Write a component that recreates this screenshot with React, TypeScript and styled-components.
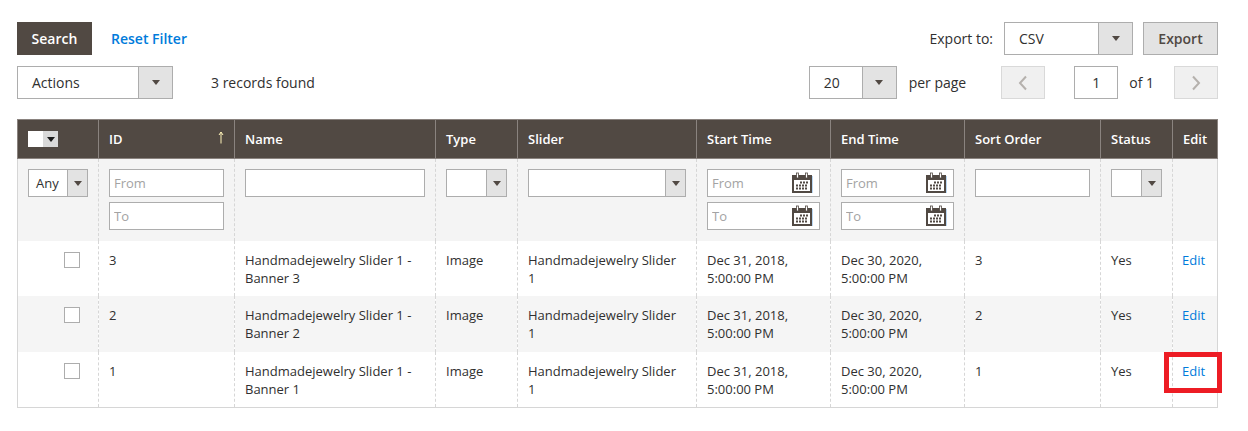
import React from 'react';
import styled, { createGlobalStyle } from 'styled-components';

const GlobalStyle = createGlobalStyle`
  body {
    margin: 0;
    background: #fff;
    font-family: 'Open Sans', sans-serif;
    color: #303030;
  }
`;

const Page = styled.div`
  padding: 22px 30px 23px 17px;
`;

const Toolbar = styled.div`
  display: flex;
  align-items: center;
  height: 33px;
  margin-bottom: 11px;
  font-size: 14px;
  &:last-of-type {
    margin-bottom: 20px;
  }
`;

const RightGroup = styled.div`
  display: flex;
  align-items: center;
  margin-left: auto;
`;

const SearchButton = styled.button`
  width: 75px;
  height: 33px;
  border: 0;
  padding: 0;
  background: #514943;
  color: #fff;
  font-family: inherit;
  font-size: 14px;
  font-weight: 600;
`;

const ResetLink = styled.a`
  margin-left: 19px;
  color: #007bdb;
  font-weight: 600;
  font-size: 14px;
`;

const ExportButton = styled.button`
  width: 75px;
  height: 33px;
  margin-left: 10px;
  border: 1px solid #adadad;
  padding: 0;
  background: #e3e3e3;
  color: #514943;
  font-family: inherit;
  font-size: 14px;
  font-weight: 600;
`;

const ToolbarText = styled.span<{ $left?: number; $right?: number }>`
  margin-left: ${p => p.$left ?? 0}px;
  margin-right: ${p => p.$right ?? 0}px;
`;

const SelectBox = styled.div<{ $width: number; $height: number; $arrow: number; $pad: number; $size: number }>`
  box-sizing: border-box;
  display: flex;
  width: ${p => p.$width}px;
  height: ${p => p.$height}px;
  border: 1px solid #adadad;
  background: #fff;
  flex: none;
  span {
    flex: 1;
    padding-left: ${p => p.$pad}px;
    line-height: ${p => p.$height - 2}px;
    font-size: ${p => p.$size}px;
  }
  i {
    box-sizing: border-box;
    display: flex;
    align-items: center;
    justify-content: center;
    width: ${p => p.$arrow}px;
    border-left: 1px solid #adadad;
    background: #e3e3e3;
  }
  i::after {
    content: '';
    border-left: 4.5px solid transparent;
    border-right: 4.5px solid transparent;
    border-top: 5px solid #514943;
  }
`;

const PagerButton = styled.button`
  display: flex;
  align-items: center;
  justify-content: center;
  width: 44px;
  height: 33px;
  padding: 0;
  border: 1px solid #d9d9d9;
  background: #f0f0f0;
  flex: none;
`;

const PageInput = styled.div`
  box-sizing: border-box;
  width: 44px;
  height: 33px;
  margin-left: 29px;
  border: 1px solid #adadad;
  text-align: center;
  line-height: 31px;
  font-size: 14px;
`;

const Grid = styled.table`
  width: 1200px;
  border-collapse: collapse;
  table-layout: fixed;
  font-size: 13px;
  line-height: 18px;
`;

const HeadCell = styled.th`
  position: relative;
  box-sizing: border-box;
  height: 39px;
  padding: 0 10px;
  border: 1px solid #8a837f;
  background: #514943;
  color: #fff;
  font-weight: 600;
  text-align: left;
`;

const SortArrow = styled.svg`
  position: absolute;
  top: 11px;
  right: 10px;
`;

const MassSelect = styled.div`
  display: flex;
  width: 30px;
  height: 16px;
  b {
    width: 15px;
    background: #fff;
  }
  i {
    display: flex;
    align-items: center;
    justify-content: center;
    width: 15px;
    background: #d9d9d9;
  }
  i::after {
    content: '';
    border-left: 4.5px solid transparent;
    border-right: 4.5px solid transparent;
    border-top: 5px solid #1a1a1a;
  }
`;

const FilterRow = styled.tr`
  background: #f4f4f4;
`;

const FilterCell = styled.td`
  box-sizing: border-box;
  height: 82px;
  padding: 10px;
  border-left: 1px dashed #d6d6d6;
  border-right: 1px dashed #d6d6d6;
  vertical-align: top;
  &:first-child {
    border-left: 1px solid #d6d6d6;
  }
  &:last-child {
    border-right: 1px solid #d6d6d6;
  }
`;

const FieldStack = styled.div`
  display: flex;
  flex-direction: column;
  gap: 5px;
`;

const FieldBox = styled.div`
  box-sizing: border-box;
  display: flex;
  align-items: center;
  width: 100%;
  height: 28px;
  border: 1px solid #adadad;
  background: #fff;
  input {
    flex: 1;
    min-width: 0;
    height: 100%;
    padding: 0 0 0 4px;
    border: 0;
    background: transparent;
    font-family: inherit;
    font-size: 13px;
    outline: none;
  }
  input::placeholder {
    color: #a3a3a3;
    opacity: 1;
  }
  svg {
    flex: none;
    margin-right: 6px;
  }
`;

const DataRow = styled.tr<{ $alt?: boolean }>`
  background: ${p => (p.$alt ? '#f5f5f5' : '#fff')};
  height: ${p => (p.$alt ? 56 : 55)}px;
  &:last-child {
    height: 56px;
  }
`;

const DataCell = styled.td`
  position: relative;
  box-sizing: border-box;
  padding: 10px 10px 8px;
  border-left: 1px dashed #d6d6d6;
  border-right: 1px dashed #d6d6d6;
  border-bottom: 0;
  vertical-align: top;
  tr:last-child > & {
    border-bottom: 1px solid #d6d6d6;
  }
  &:first-child {
    border-left: 1px solid #d6d6d6;
  }
  &:last-child {
    border-right: 1px solid #d6d6d6;
  }
`;

const SliderName = styled.div`
  max-width: 150px;
`;

const RowCheck = styled.div`
  box-sizing: border-box;
  width: 16px;
  height: 16px;
  margin: 1px 0 0 36px;
  border: 1px solid #adadad;
  background: #fff;
`;

const EditLink = styled.a`
  margin-left: -1px;
  color: #007bdb;
`;

const Highlight = styled.div`
  position: absolute;
  top: 0;
  left: -9px;
  width: 58px;
  height: 41px;
  box-sizing: border-box;
  border: 5px solid #ed1c24;
`;

const Calendar = () => (
  <svg width="22" height="22" viewBox="0 0 22 22">
    <rect x="1" y="3" width="20" height="18" fill="#514943" />
    <rect x="21" y="4" width="0.7" height="17" fill="#9cc8f0" />
    <rect x="3" y="8" width="16" height="11" fill="#fff" />
    <rect x="5.5" y="1" width="2" height="5" fill="#fff" stroke="#514943" strokeWidth="0.8" />
    <rect x="14.5" y="1" width="2" height="5" fill="#fff" stroke="#514943" strokeWidth="0.8" />
    <g fill="#514943">
      <rect x="9" y="9.5" width="2" height="2" />
      <rect x="12" y="9.5" width="2" height="2" />
      <rect x="15" y="9.5" width="2" height="2" />
      <rect x="5" y="12.5" width="2" height="2" />
      <rect x="8" y="12.5" width="2" height="2" />
      <rect x="11" y="12.5" width="2" height="2" />
      <rect x="14" y="12.5" width="2" height="2" />
      <rect x="5" y="15.5" width="2" height="2" />
      <rect x="8" y="15.5" width="2" height="2" />
      <rect x="11" y="15.5" width="2" height="2" />
      <rect x="14" y="15.5" width="2" height="2" />
    </g>
  </svg>
);

const Chevron = ({ flip }: { flip?: boolean }) => (
  <svg width="10" height="16" viewBox="0 0 10 16">
    <path
      d={flip ? 'M2 1.5 L8 8 L2 14.5' : 'M8 1.5 L2 8 L8 14.5'}
      fill="none"
      stroke="#b5b1ad"
      strokeWidth="2"
    />
  </svg>
);

const Select = ({
  label,
  width,
  arrow,
  pad = 14,
  height = 33,
  size = 14,
}: {
  label?: string;
  width: number;
  arrow: number;
  pad?: number;
  height?: number;
  size?: number;
}) => (
  <SelectBox $width={width} $height={height} $arrow={arrow} $pad={pad} $size={size}>
    <span>{label}</span>
    <i />
  </SelectBox>
);

const DateRange = () => (
  <FieldStack>
    <FieldBox>
      <input placeholder="From" />
      <Calendar />
    </FieldBox>
    <FieldBox>
      <input placeholder="To" />
      <Calendar />
    </FieldBox>
  </FieldStack>
);

const columns = [81, 136, 201, 82, 179, 134, 134, 136, 72, 45];
const headings = ['ID', 'Name', 'Type', 'Slider', 'Start Time', 'End Time', 'Sort Order', 'Status', 'Edit'];
const ids = [3, 2, 1];

export default function App() {
  return (
    <Page>
      <GlobalStyle />
      <Toolbar>
        <SearchButton>Search</SearchButton>
        <ResetLink>Reset Filter</ResetLink>
        <RightGroup>
          <ToolbarText $right={11}>Export to:</ToolbarText>
          <Select label="CSV" width={129} arrow={34} />
          <ExportButton>Export</ExportButton>
        </RightGroup>
      </Toolbar>
      <Toolbar>
        <Select label="Actions" width={156} arrow={34} />
        <ToolbarText $left={38}>3 records found</ToolbarText>
        <RightGroup>
          <Select label="20" width={88} arrow={34} />
          <ToolbarText $left={12} $right={35}>per page</ToolbarText>
          <PagerButton>
            <Chevron />
          </PagerButton>
          <PageInput>1</PageInput>
          <ToolbarText $left={11} $right={20}>of 1</ToolbarText>
          <PagerButton>
            <Chevron flip />
          </PagerButton>
        </RightGroup>
      </Toolbar>
      <Grid>
        <colgroup>
          {columns.map((w, i) => (
            <col key={i} style={{ width: w }} />
          ))}
        </colgroup>
        <thead>
          <tr>
            <HeadCell>
              <MassSelect>
                <b />
                <i />
              </MassSelect>
            </HeadCell>
            {headings.map(h => (
              <HeadCell key={h}>
                {h}
                {h === 'ID' && (
                  <SortArrow width="6" height="13" viewBox="0 0 6 13">
                    <path d="M3 12.5 V1 M1 4 L3 1 L5 4" fill="none" stroke="#fff3b8" strokeWidth="1" />
                  </SortArrow>
                )}
              </HeadCell>
            ))}
          </tr>
        </thead>
        <tbody>
          <FilterRow>
            <FilterCell>
              <Select label="Any" width={60} arrow={20} pad={7} height={28} size={13} />
            </FilterCell>
            <FilterCell>
              <FieldStack>
                <FieldBox>
                  <input placeholder="From" />
                </FieldBox>
                <FieldBox>
                  <input placeholder="To" />
                </FieldBox>
              </FieldStack>
            </FilterCell>
            <FilterCell>
              <FieldBox />
            </FilterCell>
            <FilterCell>
              <Select width={61} arrow={20} height={28} />
            </FilterCell>
            <FilterCell>
              <Select width={158} arrow={20} height={28} />
            </FilterCell>
            <FilterCell>
              <DateRange />
            </FilterCell>
            <FilterCell>
              <DateRange />
            </FilterCell>
            <FilterCell>
              <FieldBox />
            </FilterCell>
            <FilterCell>
              <Select width={51} arrow={20} height={28} />
            </FilterCell>
            <FilterCell />
          </FilterRow>
          {ids.map((id, i) => (
            <DataRow key={id} $alt={i === 1}>
              <DataCell>
                <RowCheck />
              </DataCell>
              <DataCell>{id}</DataCell>
              <DataCell>{`Handmadejewelry Slider 1 - Banner ${id}`}</DataCell>
              <DataCell>Image</DataCell>
              <DataCell>
                <SliderName>Handmadejewelry Slider 1</SliderName>
              </DataCell>
              <DataCell>Dec 31, 2018, 5:00:00 PM</DataCell>
              <DataCell>Dec 30, 2020, 5:00:00 PM</DataCell>
              <DataCell>{id}</DataCell>
              <DataCell>Yes</DataCell>
              <DataCell>
                <EditLink>Edit</EditLink>
                {id === 1 && <Highlight />}
              </DataCell>
            </DataRow>
          ))}
        </tbody>
      </Grid>
    </Page>
  );
}
